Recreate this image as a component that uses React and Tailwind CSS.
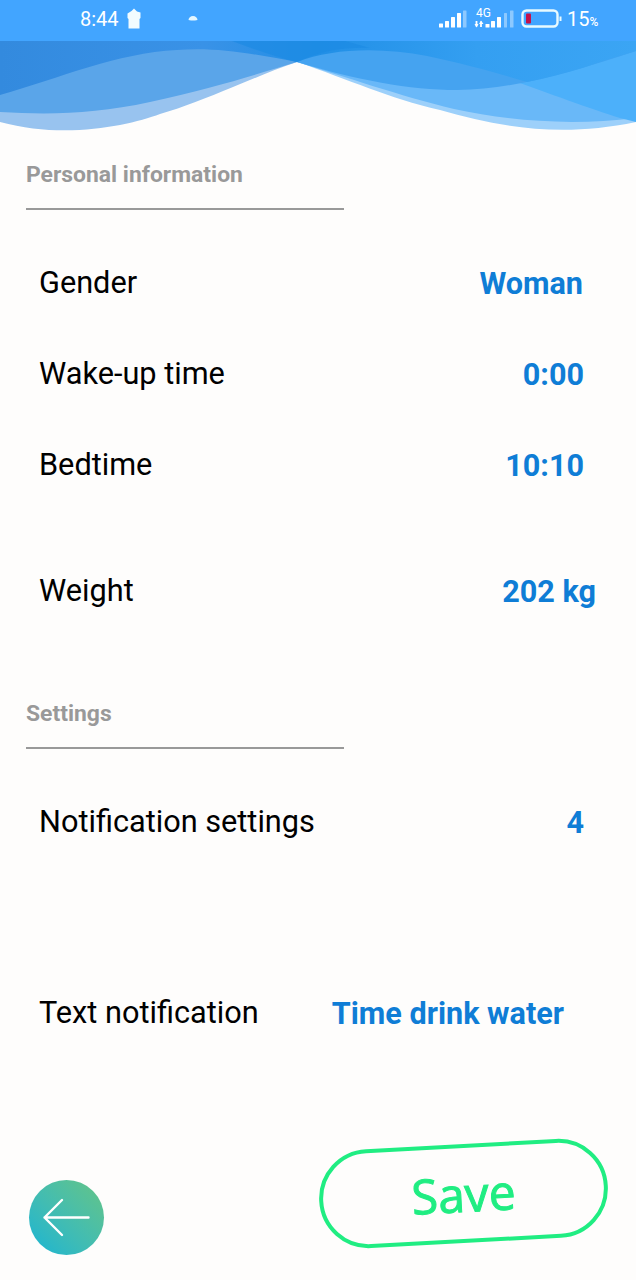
const personal = [
  { label: 'Gender', value: 'Woman', row: 'pr-[53px]' },
  { label: 'Wake-up time', value: '0:00', row: 'mt-[51px] pr-[52px]' },
  { label: 'Bedtime', value: '10:10', row: 'mt-[51px] pr-[52px]' },
  { label: 'Weight', value: '202 kg', row: 'mt-[86px] pr-10' },
];

const settings = [
  { label: 'Notification settings', value: '4', row: 'pr-[52px]' },
  { label: 'Text notification', value: 'Time drink water', row: 'mt-[151px] pr-[72px]' },
];

/* Status bar */
function StatusBar() {
  return (
    <div className="flex h-[41px] items-start bg-[#42a5ff] pl-20 text-white">
      <span className="mt-[7px] w-[46px] text-[20px] leading-6">8:44</span>
      <svg className="mt-2 h-[22px] w-4" viewBox="0 0 16 22" fill="#f2fcff">
        <path d="M5.500 3 8 .5 11 3.500 14.500 4.500V10L13.500 11V20.500H2.500V11L1.500 10V5.500Z" />
      </svg>
      <svg className="ml-[46px] mt-[14px] h-2 w-[10px]" viewBox="0 0 10 8" fill="#e4f7ff">
        <path d="M.5 6C.5 3.800 2.500 2 5 2s4.500 1.800 4.500 4L7 6.500H3Z" />
      </svg>

      {/* Signal strength of both SIM cards */}
      <svg className="ml-[241px] mt-[9px] h-5 w-7" viewBox="0 0 28 20" fill="#fff">
        <rect x="0" y="14.500" width="4" height="4" rx=".5" />
        <rect x="6" y="12" width="4" height="6.500" rx=".5" />
        <rect x="12" y="8" width="4" height="10.500" rx=".5" />
        <rect x="18" y="4" width="4" height="14.500" rx=".5" />
        <rect x="24" y="1.500" width="3.500" height="17" rx=".5" opacity=".4" />
      </svg>
      <div className="ml-1.5 mt-[7px] w-[43px]">
        <div className="relative h-[22px]">
          <span className="absolute left-[3px] top-0 text-[12px] leading-3">4G</span>
          <svg className="h-full w-full" viewBox="0 0 43 22" fill="#fff">
            <path d="M3.500 14v5.500M8 20v-5.500" stroke="#fff" strokeWidth="1.800" />
            <path d="M1.500 17h4L3.500 20.500ZM6 17h4.500L8 13.500Z" />
            <rect x="12.500" y="17" width="4" height="3.500" rx=".5" />
            <rect x="18" y="14" width="4" height="6.500" rx=".5" />
            <rect x="24" y="10" width="4" height="10.500" rx=".5" />
            <rect x="31" y="6" width="3" height="14.500" rx=".5" opacity=".4" />
            <rect x="37" y="3.500" width="3.500" height="17" rx=".5" opacity=".4" />
          </svg>
        </div>
      </div>
      <svg className="ml-[5px] mt-[9px] h-[19px] w-[42px]" viewBox="0 0 42 19">
        <rect x="1.500" y="1.500" width="35" height="16" rx="4" fill="none" stroke="#e8faff" strokeWidth="2.400" />
        <rect x="5" y="4.500" width="5" height="10" rx="1" fill="#c4104a" />
        <path d="M39.500 7.500v4.500" stroke="#e8faff" strokeWidth="2" />
      </svg>
      <span className="ml-1 mt-[7px] whitespace-nowrap text-[20px] leading-6">
        15<span className="text-[12px] font-medium">%</span>
      </span>
    </div>
  );
}

/* Overlapping translucent waves under the status bar */
function Waves() {
  return (
    <svg className="block h-[90px] w-full" viewBox="0 41 636 90">
      <defs>
        <linearGradient id="base" x1="0" x2="636" y1="0" y2="0" gradientUnits="userSpaceOnUse">
          <stop offset="0" stopColor="#338ade" />
          <stop offset=".32" stopColor="#3992e7" />
          <stop offset=".5" stopColor="#218fe6" />
          <stop offset=".75" stopColor="#349ff1" />
          <stop offset="1" stopColor="#3ba5f4" />
        </linearGradient>
      </defs>
      <path d="M0 41H297V62C273 70 253 79 233 87C206 98 184 107 160 114C130 125 66 140 0 122Z" fill="#98c3ef" />
      <path d="M297 62C350 80 388 98 440 110C500 127 560 138 636 122V41H297Z" fill="#9dd0fa" />
      <path d="M0 41H297V62C260 73 215 88 150 102C95 114 50 115 0 112Z" fill="#5aa5e9" />
      <path d="M297 41H636V118C570 126 510 121 454 109C400 96 343 76 297 62Z" fill="#69b8f8" />
      <path d="M0 41H297V62C250 53 215 47 177 50C117 53 60 78 0 95Z" fill="url(#base)" />
      <path d="M297 62C332 48 382 47 427 56C485 67 570 103 620 118L636 122V41H297Z" fill="#4cb0fa" />
      <path d="M297 62C356 80 410 90 457 90C520 89 577 70 636 51V41H297Z" fill="#45a3f0" />
      <path d="M297 62C332 48 382 47 427 56C465 64 497 73 527 82C566 75 602 61 636 51V41H235Q265 54 297 62Z" fill="url(#base)" />
      <path d="M232 41C255 50 277 57 297 62C320 51 345 47 370 48L345 41Z" fill="#1b8be4" opacity=".65" />
    </svg>
  );
}

function Section({ title, rows, className, listClass }) {
  return (
    <section className={className}>
      <h2 className="ml-[26px] w-[318px] border-b-2 border-[#999] pb-5 text-[22.900px] font-bold leading-[26px] text-[#999]">
        {title}
      </h2>
      <div className={listClass}>
        {rows.map(({ label, value, row }) => (
          <div key={label} className={`flex h-10 items-center justify-between pl-[39px] ${row}`}>
            <span className="text-[30.700px] text-black">{label}</span>
            <span className="mt-0.5 text-[30.600px] font-bold text-[#0f7dd6]">{value}</span>
          </div>
        ))}
      </div>
    </section>
  );
}

export default function App() {
  return (
    <div className="h-[1280px] w-[636px] overflow-hidden bg-[#fefdfc] font-['Roboto',sans-serif]">
      <StatusBar />
      <Waves />
      <Section title="Personal information" rows={personal} className="pt-[31px]" listClass="pt-[53px]" />
      <Section title="Settings" rows={settings} className="mt-[90px]" listClass="pt-[53px]" />

      <div className="mt-[109px] flex justify-between pl-[29px] pr-7">
        <button aria-label="Back" className="mt-[38px] h-[75px] w-[75px] rounded-full bg-linear-to-tr from-[#10b4d4] to-[#64c484]">
          <svg viewBox="0 0 75 75" fill="none" stroke="#fff" strokeWidth="2.400" strokeLinecap="round" strokeLinejoin="round">
            <path d="M59.500 37.500H15.500M33 20 15.500 37.500 33 55" />
          </svg>
        </button>
        <button className="mt-0.5 flex h-[99px] w-[289px] -rotate-[3.100deg] items-center justify-center rounded-full border-4 border-[#20ed82] font-['Open_Sans',sans-serif] text-[48px] leading-none text-[#20ed82] [-webkit-text-stroke:1px_#20ed82]">
          Save
        </button>
      </div>
    </div>
  );
}
